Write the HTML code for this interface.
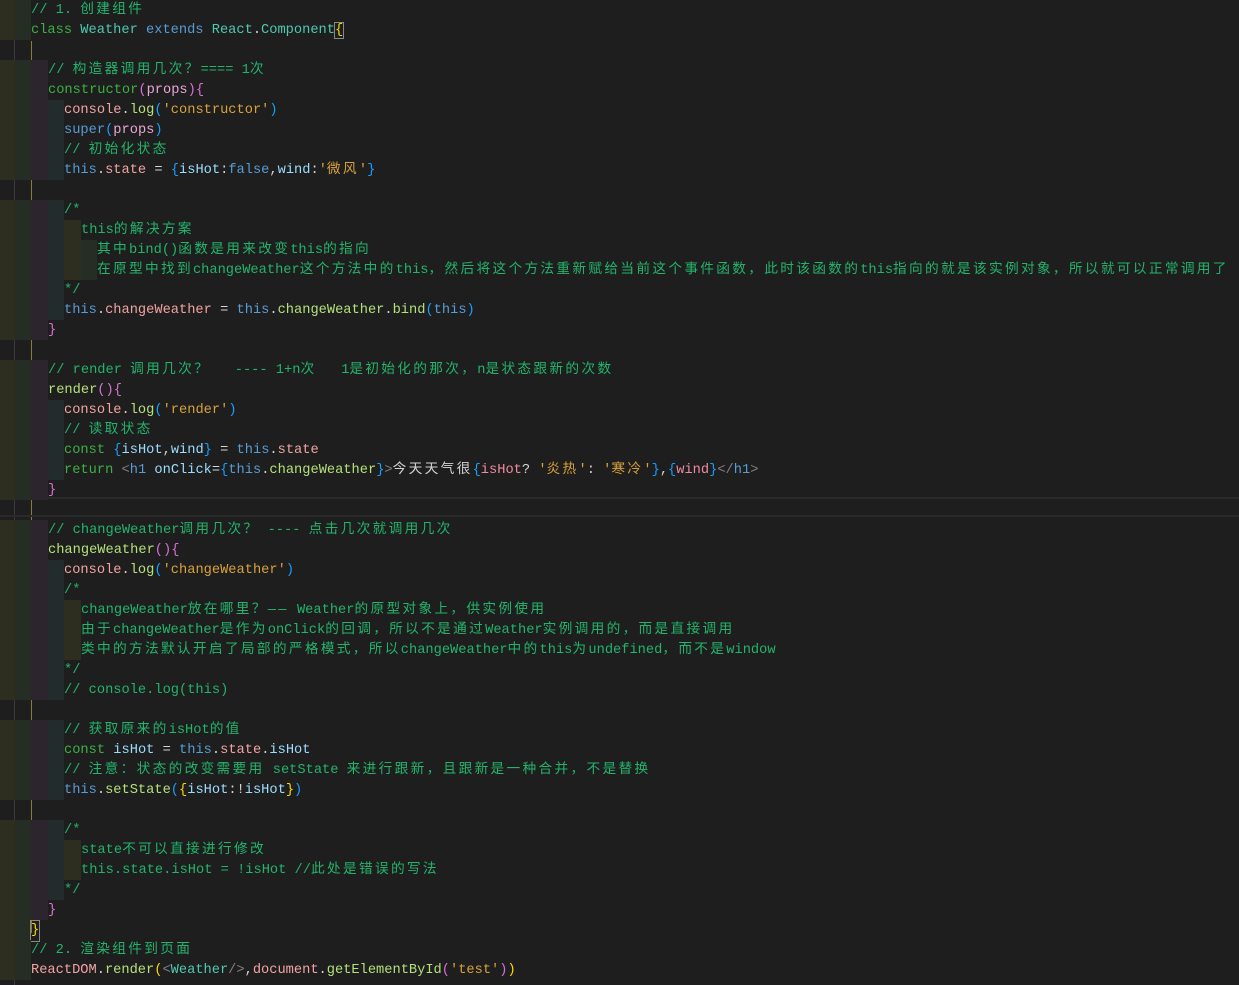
<!DOCTYPE html>
<html><head><meta charset="utf-8">
<style>
html,body{margin:0;padding:0;background:#1e1e1e;width:1239px;height:985px;overflow:hidden}
#ed{position:relative;width:1239px;height:985px;font-family:"Liberation Mono","Noto Sans CJK SC",monospace;font-size:13.7px;color:#d4d4d4}
#ln{position:absolute;left:0;top:2px;width:1239px;height:985px}
.r{position:absolute;left:0;height:20px;line-height:20px;white-space:pre;width:1239px}
.r::before{content:"";position:absolute;left:0;top:0;height:20px;width:var(--w);background:linear-gradient(to right,#2e2e20 0 15px,#252d25 15px 31px,#2d252e 31px 48px,#222c2c 48px 64px,#2e2e20 64px 81px,#252d25 81px 97px)}
.r>.t{position:absolute;top:1px;left:var(--w)}
.i0{--w:31px}.i1{--w:48px}.i2{--w:64px}.i3{--w:81px}.i4{--w:97px}
.b::before{display:none}
.c{color:#22b46c}.k{color:#3cb043}.m{color:#b5e07a}.th{color:#569cd6}.p{color:#f2a3a3}.cl{color:#4ec9b0}
.v{color:#9cdcfe}.s{color:#d9a23a}.g{color:#808080}.pr{color:#e7a8d8}.w{color:#d4d4d4}
.y{color:#ffd700}.pu{color:#da70d6}.bl{color:#179fff}.jv{color:#f08aa0}
.cj{letter-spacing:2.3px}
</style></head><body><div id="ed">
<div style="position:absolute;left:14px;top:0;width:1px;height:985px;background:#3a3a3a"></div>
<div style="position:absolute;left:31px;top:41px;width:1px;height:892px;background:#8a7d35"></div>
<div style="position:absolute;left:0;top:497px;width:1239px;height:20px;box-sizing:border-box;border-top:2px solid #2a2a2a;border-bottom:2px solid #2a2a2a"></div>
<div id="ln">
<div class="r i0" style="top:-2px"><span class="t c">// 1. 创建组件</span></div>
<div class="r i0" style="top:18px"><span class="t"><span class="k">class</span> <span class="cl">Weather</span> <span class="th">extends</span> <span class="cl">React</span>.<span class="cl">Component</span><span class="y" style="outline:1px solid #888">{</span></span></div>
<div class="r b" style="top:38px"></div>
<div class="r i1" style="top:58px"><span class="t c">// 构造器调用几次？==== 1次</span></div>
<div class="r i1" style="top:78px"><span class="t"><span class="k">constructor</span><span class="pu">(</span><span class="pr">props</span><span class="pu">){</span></span></div>
<div class="r i2" style="top:98px"><span class="t"><span class="p">console</span>.<span class="m">log</span><span class="bl">(</span><span class="s">'constructor'</span><span class="bl">)</span></span></div>
<div class="r i2" style="top:118px"><span class="t"><span class="th">super</span><span class="bl">(</span><span class="pr">props</span><span class="bl">)</span></span></div>
<div class="r i2" style="top:138px"><span class="t c">// 初始化状态</span></div>
<div class="r i2" style="top:158px"><span class="t"><span class="th">this</span>.<span class="p">state</span> = <span class="bl">{</span><span class="v">isHot</span>:<span class="th">false</span>,<span class="v">wind</span>:<span class="s">'微风'</span><span class="bl">}</span></span></div>
<div class="r b" style="top:178px"></div>
<div class="r i2" style="top:198px"><span class="t c">/*</span></div>
<div class="r i3" style="top:218px"><span class="t c">this的解决方案</span></div>
<div class="r i4" style="top:238px"><span class="t c">其中bind()函数是用来改变this的指向</span></div>
<div class="r i4" style="top:258px"><span class="t c">在原型中找到changeWeather这个方法中的this，然后将这个方法重新赋给当前这个事件函数，此时该函数的this指向的就是该实例对象，所以就可以正常调用了</span></div>
<div class="r i2" style="top:278px"><span class="t c">*/</span></div>
<div class="r i2" style="top:298px"><span class="t"><span class="th">this</span>.<span class="p">changeWeather</span> = <span class="th">this</span>.<span class="m">changeWeather</span>.<span class="m">bind</span><span class="bl">(</span><span class="th">this</span><span class="bl">)</span></span></div>
<div class="r i1" style="top:318px"><span class="t pu">}</span></div>
<div class="r b" style="top:338px"></div>
<div class="r i1" style="top:358px"><span class="t c">// render 调用几次？   ---- 1+n次   1是初始化的那次，n是状态跟新的次数</span></div>
<div class="r i1" style="top:378px"><span class="t"><span class="m">render</span><span class="pu">(){</span></span></div>
<div class="r i2" style="top:398px"><span class="t"><span class="p">console</span>.<span class="m">log</span><span class="bl">(</span><span class="s">'render'</span><span class="bl">)</span></span></div>
<div class="r i2" style="top:418px"><span class="t c">// 读取状态</span></div>
<div class="r i2" style="top:438px"><span class="t"><span class="k">const</span> <span class="bl">{</span><span class="v">isHot</span>,<span class="v">wind</span><span class="bl">}</span> = <span class="th">this</span>.<span class="p">state</span></span></div>
<div class="r i2" style="top:458px"><span class="t"><span class="k">return</span> <span class="g">&lt;</span><span class="th">h1</span> <span class="v">onClick</span>=<span class="bl">{</span><span class="th">this</span>.<span class="m">changeWeather</span><span class="bl">}</span><span class="g">&gt;</span>今天天气很<span class="bl">{</span><span class="jv">isHot</span>? <span class="s">'炎热'</span>: <span class="s">'寒冷'</span><span class="bl">}</span>,<span class="bl">{</span><span class="jv">wind</span><span class="bl">}</span><span class="g">&lt;/</span><span class="th">h1</span><span class="g">&gt;</span></span></div>
<div class="r i1" style="top:478px"><span class="t pu">}</span></div>
<div class="r b" style="top:498px"></div>
<div class="r i1" style="top:518px"><span class="t c">// changeWeather调用几次？ ---- 点击几次就调用几次</span></div>
<div class="r i1" style="top:538px"><span class="t"><span class="m">changeWeather</span><span class="pu">(){</span></span></div>
<div class="r i2" style="top:558px"><span class="t"><span class="p">console</span>.<span class="m">log</span><span class="bl">(</span><span class="s">'changeWeather'</span><span class="bl">)</span></span></div>
<div class="r i2" style="top:578px"><span class="t c">/*</span></div>
<div class="r i3" style="top:598px"><span class="t c">changeWeather放在哪里？—— Weather的原型对象上，供实例使用</span></div>
<div class="r i3" style="top:618px"><span class="t c">由于changeWeather是作为onClick的回调，所以不是通过Weather实例调用的，而是直接调用</span></div>
<div class="r i3" style="top:638px"><span class="t c">类中的方法默认开启了局部的严格模式，所以changeWeather中的this为undefined，而不是window</span></div>
<div class="r i2" style="top:658px"><span class="t c">*/</span></div>
<div class="r i2" style="top:678px"><span class="t c">// console.log(this)</span></div>
<div class="r b" style="top:698px"></div>
<div class="r i2" style="top:718px"><span class="t c">// 获取原来的isHot的值</span></div>
<div class="r i2" style="top:738px"><span class="t"><span class="k">const</span> <span class="v">isHot</span> = <span class="th">this</span>.<span class="p">state</span>.<span class="v">isHot</span></span></div>
<div class="r i2" style="top:758px"><span class="t c">// 注意：状态的改变需要用 setState 来进行跟新，且跟新是一种合并，不是替换</span></div>
<div class="r i2" style="top:778px"><span class="t"><span class="th">this</span>.<span class="m">setState</span><span class="bl">(</span><span class="y">{</span><span class="v">isHot</span>:!<span class="v">isHot</span><span class="y">}</span><span class="bl">)</span></span></div>
<div class="r b" style="top:798px"></div>
<div class="r i2" style="top:818px"><span class="t c">/*</span></div>
<div class="r i3" style="top:838px"><span class="t c">state不可以直接进行修改</span></div>
<div class="r i3" style="top:858px"><span class="t c">this.state.isHot = !isHot //此处是错误的写法</span></div>
<div class="r i2" style="top:878px"><span class="t c">*/</span></div>
<div class="r i1" style="top:898px"><span class="t pu">}</span></div>
<div class="r i0" style="top:918px"><span class="t y" style="outline:1px solid #888">}</span></div>
<div class="r i0" style="top:938px"><span class="t c">// 2. 渲染组件到页面</span></div>
<div class="r i0" style="top:958px"><span class="t"><span class="p">ReactDOM</span>.<span class="m">render</span><span class="y">(</span><span class="g">&lt;</span><span class="cl">Weather</span><span class="g">/&gt;</span>,<span class="p">document</span>.<span class="m">getElementById</span><span class="pu">(</span><span class="s">'test'</span><span class="pu">)</span><span class="y">)</span></span></div>
</div>
</div>
<script>
(function(){
var re=/[\u2014\u3000-\u303f\u3400-\u9fff\uff00-\uffef]+/g;
var w=document.createTreeWalker(document.getElementById('ed'),NodeFilter.SHOW_TEXT,null,false);
var nodes=[];while(w.nextNode())nodes.push(w.currentNode);
nodes.forEach(function(n){
 var t=n.nodeValue;if(!re.test(t))return;re.lastIndex=0;
 var f=document.createDocumentFragment(),last=0,m;
 while((m=re.exec(t))){
  if(m.index>last)f.appendChild(document.createTextNode(t.slice(last,m.index)));
  var s=document.createElement('span');s.className='cj';s.textContent=m[0];f.appendChild(s);
  last=m.index+m[0].length;
 }
 if(last<t.length)f.appendChild(document.createTextNode(t.slice(last)));
 n.parentNode.replaceChild(f,n);
});
})();
</script>
</body></html>
